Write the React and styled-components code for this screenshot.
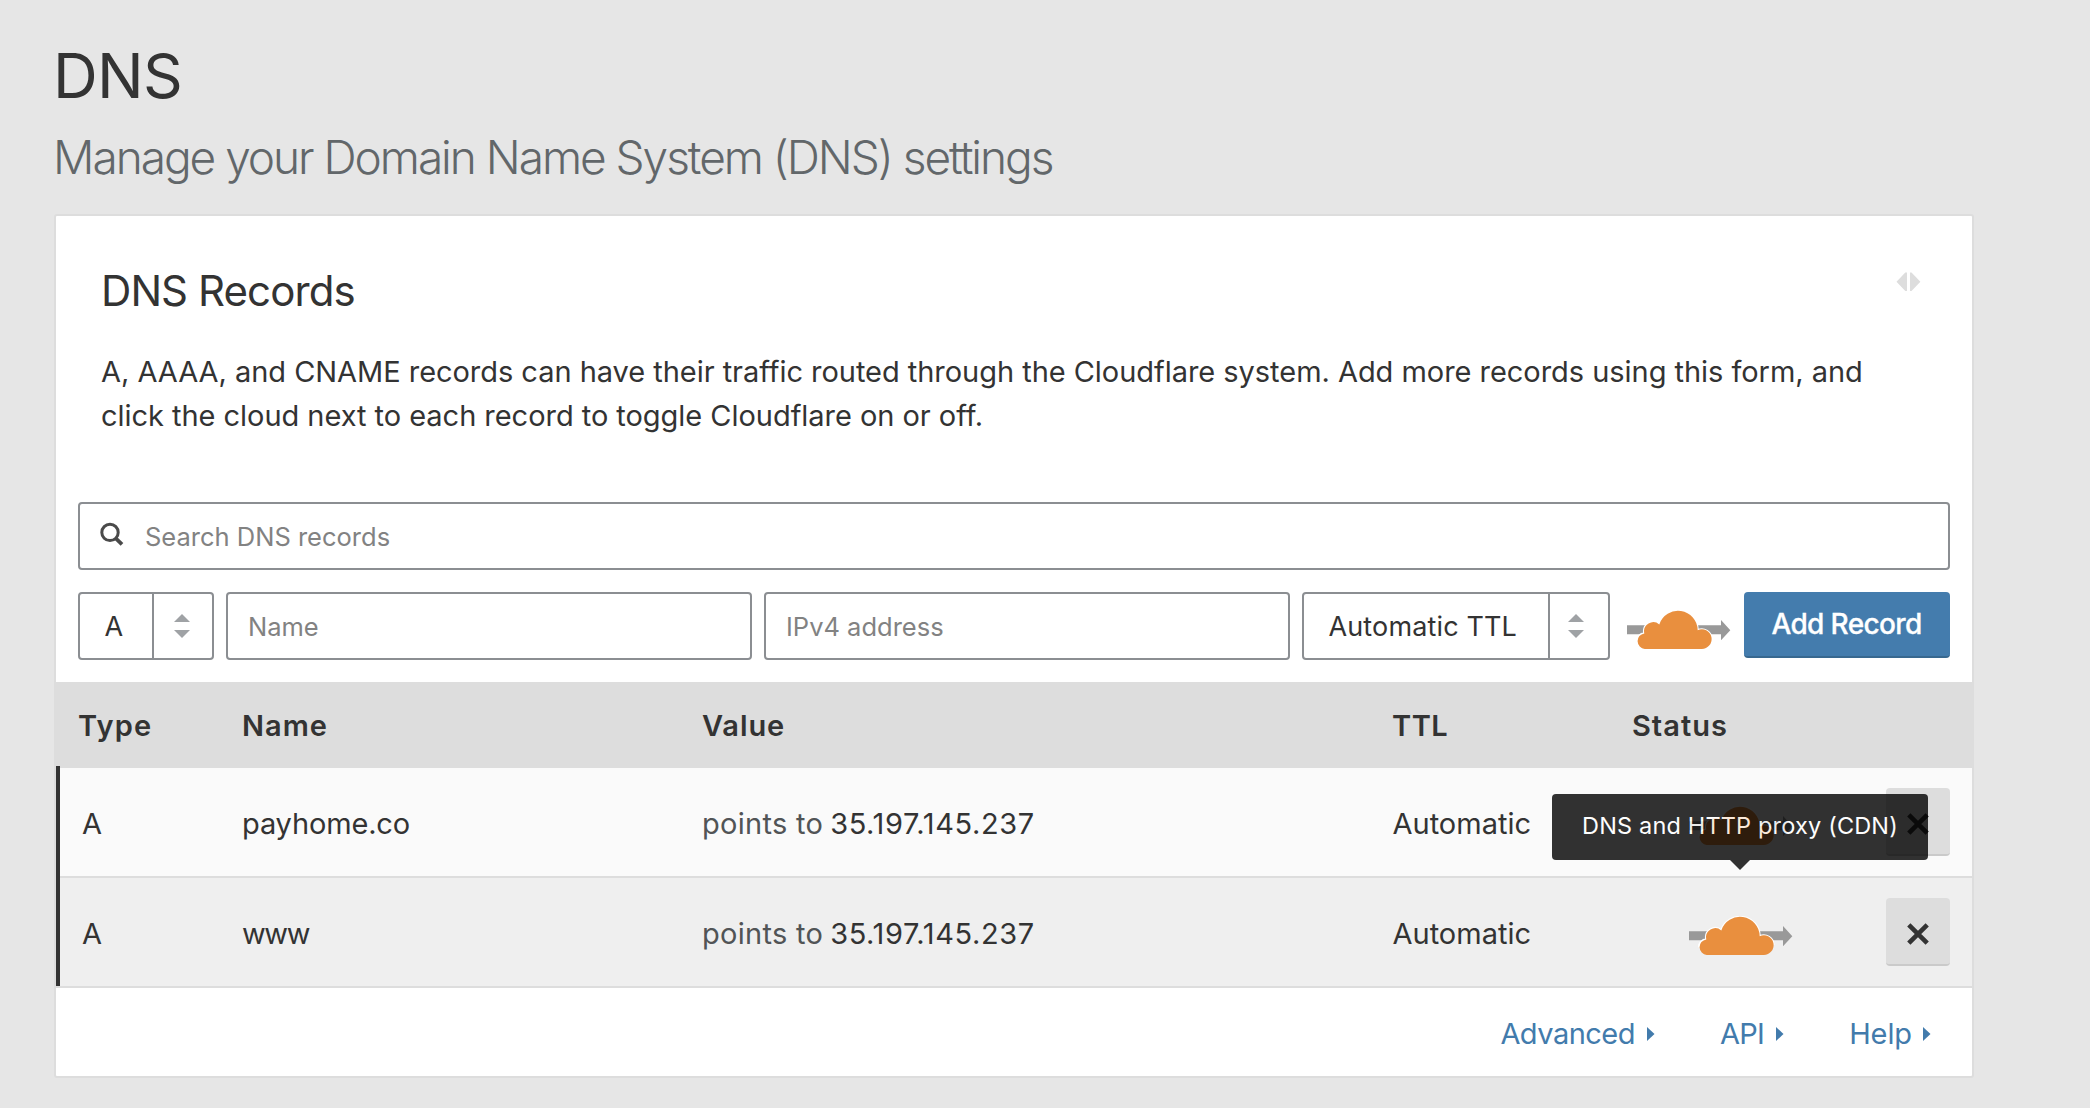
import React from "react";
import styled, { createGlobalStyle } from "styled-components";

const ink = "#333333";
const line = "#dddddd";
const fieldBorder = "#8b8e92";
const blue = "#427bac";

const GlobalStyle = createGlobalStyle`
  *, *::before, *::after { box-sizing: border-box; }
  body {
    margin: 0;
    background: #e6e6e6;
    color: ${ink};
    font-family: "Inter", "Liberation Sans", sans-serif;
  }
`;

const Page = styled.main`
  width: 1974px;
  min-height: 1108px;
  padding: 40px 0 0 54px;
`;

const Title = styled.h1`
  margin: 0 0 17px -1px;
  font-size: 62px;
  font-weight: 400;
  line-height: 72px;
  letter-spacing: -0.73px;
`;

const Subtitle = styled.p`
  margin: 0 0 29px -1px;
  color: #62676a;
  font-size: 46px;
  font-weight: 300;
  line-height: 56px;
  letter-spacing: -2.03px;
  white-space: nowrap;
`;

const Panel = styled.section`
  height: 864px;
  border: 2px solid ${line};
  border-radius: 3px;
  background: #fff;
`;

const Intro = styled.header`
  display: grid;
  grid-template-columns: 1fr auto;
  row-gap: 33px;
  height: 286px;
  align-content: start;
  padding: 49px 51px 0 45px;
`;

const PanelTitle = styled.h2`
  margin: 0;
  font-size: 42px;
  font-weight: 400;
  line-height: 52px;
  letter-spacing: -0.92px;
`;

const ToggleIcon = styled.svg`
  margin-top: 7px;
  fill: ${line};
`;

const Description = styled.p`
  grid-column: 1 / -1;
  width: 1800px;
  margin: 0;
  font-size: 29px;
  line-height: 44px;
  letter-spacing: -0.04px;
`;

const Form = styled.form`
  display: flex;
  flex-direction: column;
  gap: 22px;
  padding: 0 22px 22px;
`;

const FormRow = styled.div`
  display: flex;
  align-items: flex-start;
  gap: 12px;
`;

const Field = styled.label`
  display: flex;
  align-items: center;
  width: ${(p) => p.$width};
  height: 68px;
  padding-left: 20px;
  border: 2px solid ${fieldBorder};
  border-radius: 4px;
  background: #fff;
`;

const Placeholder = styled.span`
  color: #828282;
  font-size: 25.5px;
  white-space: nowrap;
`;

const SearchIcon = styled.svg`
  margin: -4px 21px 0 0;
  fill: none;
  stroke: #4a4a4a;
`;

const SelectBox = styled.div`
  display: flex;
  width: ${(p) => p.$width};
  height: 68px;
  border: 2px solid ${fieldBorder};
  border-radius: 4px;
`;

const SelectValue = styled.span`
  display: flex;
  flex: 1;
  align-items: center;
  padding-left: 24.5px;
  font-size: 27px;
  letter-spacing: 0.14px;
  white-space: nowrap;
`;

const SelectHandle = styled.span`
  display: flex;
  align-items: center;
  width: 60px;
  padding-left: ${(p) => p.$inset};
  border-left: 2px solid ${fieldBorder};

  svg { fill: #9fa2a5; }
`;

const ProxyToggle = styled.div`
  position: relative;
  flex: none;
  width: 104px;
  height: 40px;
  margin: ${(p) => p.$margin};

  > svg { display: block; }
`;

const AddButton = styled.button`
  width: 206px;
  height: 66px;
  padding: 0 1px 0 0;
  border: 0;
  border-bottom: 2px solid #38688f;
  border-radius: 4px;
  background: #447cad;
  color: #fff;
  font: 500 28px/64px "Inter", "Liberation Sans", sans-serif;
  letter-spacing: -0.64px;
  -webkit-text-stroke: 0.3px #fff;
`;

const columns = "460px 690px 240px 254px 64px";

const TableHead = styled.div`
  display: grid;
  grid-template-columns: 186px ${columns};
  align-items: center;
  height: 84px;
  padding-top: 3px;
  background: ${line};
`;

const HeadCell = styled.span`
  padding-left: ${(p) => p.$inset || "0"};
  font-size: 29px;
  font-weight: 600;
  letter-spacing: ${(p) => p.$track || "1px"};
`;

const Row = styled.div`
  height: 110px;
  border-left: 4px solid ${ink};
  background: ${(p) => (p.$hovered ? "#efefef" : "#fafafa")};
`;

const RowGrid = styled.div`
  display: grid;
  grid-template-columns: 182px ${columns};
  align-items: center;
  height: 100%;
  border-top: 2px solid ${line};
`;

const Cell = styled.span`
  padding: 3px 0 0 ${(p) => p.$inset || "0"};
  font-size: 29px;
  letter-spacing: ${(p) => p.$track || "0"};
  white-space: nowrap;
`;

const Muted = styled.span`
  color: #515456;
  letter-spacing: 0.29px;
`;

const Address = styled.span`
  margin-left: -1.5px;
  letter-spacing: 0.6px;
`;

const DeleteButton = styled.button`
  display: flex;
  align-items: center;
  justify-content: center;
  width: 64px;
  height: 68px;
  padding: 5px 0 0;
  border: 0;
  border-bottom: 2px solid #cacaca;
  border-radius: 4px;
  background: ${line};

  svg { stroke: ${ink}; }
`;

const Tooltip = styled.div`
  position: absolute;
  top: -122px;
  left: -137px;
  display: flex;
  align-items: center;
  width: 376px;
  height: 66px;
  padding: 0 0 3px 30px;
  border-radius: 4px;
  background: #000;
  color: #fff;
  font-size: 23.5px;
  letter-spacing: 0.17px;
  white-space: nowrap;
  opacity: 0.8;

  &::after {
    content: "";
    position: absolute;
    top: 100%;
    left: 178px;
    border: solid transparent;
    border-width: 10px 10px 0;
    border-top-color: #000;
  }
`;

const Footer = styled.footer`
  display: flex;
  align-items: center;
  justify-content: flex-end;
  gap: 65px;
  height: 90px;
  padding: 3px 41px 0 0;
  border-top: 2px solid ${line};
`;

const FooterLink = styled.a`
  display: flex;
  align-items: center;
  gap: 12px;
  color: ${blue};
  font-size: 29px;
  letter-spacing: ${(p) => p.$track || "0"};

  &:last-child { gap: 11px; }

  svg { fill: ${blue}; }
`;

function CloudIcon() {
  return (
    <svg width="104" height="40" viewBox="0 -0.7 104 40">
      <path fill="#999" d="M0 14.5H94V9.3L103.3 19.5 94 29.5V23.5H0Z" />
      <path
        fill="none"
        stroke="#fff"
        strokeWidth="2.2"
        d="M10 30.5A7.8 7.8 0 0 1 17.3 22.7A9.2 9.2 0 0 1 32.3 13.7A19.7 19.7 0 0 1 70.7 19.5A9.8 9.8 0 0 1 84.5 28.4"
      />
      <path
        fill="#e98f3e"
        d="M17.8 38.2A7.8 7.8 0 0 1 17.3 22.7A9.2 9.2 0 0 1 32.3 13.7A19.7 19.7 0 0 1 70.7 19.5A9.8 9.8 0 1 1 74.7 38.2Z"
      />
    </svg>
  );
}

function Select({ width, inset, children }) {
  return (
    <SelectBox $width={width}>
      <SelectValue>{children}</SelectValue>
      <SelectHandle $inset={inset}>
        <svg width="16" height="24" viewBox="0 0 16 24">
          <path d="M0 8L8 0L16 8ZM0 16H16L8 24Z" />
        </svg>
      </SelectHandle>
    </SelectBox>
  );
}

function RecordRow({ name, track, tooltip }) {
  return (
    <Row $hovered={Boolean(tooltip)}>
      <RowGrid>
        <Cell $inset="22px">A</Cell>
        <Cell $track={track}>{name}</Cell>
        <Cell>
          <Muted>points to </Muted>
          <Address>35.197.145.237</Address>
        </Cell>
        <Cell $inset="0.5px">Automatic</Cell>
        <ProxyToggle $margin="8px 0 0 57px">
          <CloudIcon />
          {tooltip && <Tooltip>{tooltip}</Tooltip>}
        </ProxyToggle>
        <DeleteButton type="button">
          <svg width="22" height="22" viewBox="0 0 22 22" strokeWidth="4.6">
            <path d="M1.8 1.8L20.2 20.2M20.2 1.8L1.8 20.2" />
          </svg>
        </DeleteButton>
      </RowGrid>
    </Row>
  );
}

const links = [
  { label: "Advanced", track: "-0.52px" },
  { label: "API", track: "-0.7px" },
  { label: "Help", track: "-0.1px" },
];

export default function App() {
  return (
    <>
      <GlobalStyle />
      <Page>
        <Title>DNS</Title>
        <Subtitle>Manage your Domain Name System (DNS) settings</Subtitle>
        <Panel>
          <Intro>
            <PanelTitle>DNS Records</PanelTitle>
            <ToggleIcon width="25" height="19" viewBox="0 0 25 19">
              <path d="M0.5 9.7L9.3 0.5H11V19H9.3ZM14 0.5H15.5L24.4 9.7L15.5 19H14Z" />
            </ToggleIcon>
            <Description>
              A, AAAA, and CNAME records can have their traffic routed through the Cloudflare system. Add more
              records using this form, and click the cloud next to each record to toggle Cloudflare on or off.
            </Description>
          </Intro>
          <Form>
            <Field $width="100%">
              <SearchIcon width="24" height="24" viewBox="0 0 24 24">
                <circle cx="10" cy="10.4" r="8.2" strokeWidth="3" />
                <path d="M15.8 16.4L22 22.4" strokeWidth="3.8" />
              </SearchIcon>
              <Placeholder>Search DNS records</Placeholder>
            </Field>
            <FormRow>
              <Select width="136px" inset="20px">A</Select>
              <Field $width="526px">
                <Placeholder>Name</Placeholder>
              </Field>
              <Field $width="526px">
                <Placeholder>IPv4 address</Placeholder>
              </Field>
              <Select width="308px" inset="18px">Automatic TTL</Select>
              <ProxyToggle $margin="18px 1px 0 5px">
                <CloudIcon />
              </ProxyToggle>
              <AddButton type="button">Add Record</AddButton>
            </FormRow>
          </Form>
          <TableHead>
            <HeadCell $inset="22px" $track="1.2px">Type</HeadCell>
            <HeadCell>Name</HeadCell>
            <HeadCell $track="0.9px">Value</HeadCell>
            <HeadCell $track="0.5px">TTL</HeadCell>
            <HeadCell>Status</HeadCell>
          </TableHead>
          <RecordRow name="payhome.co" track="-0.15px" />
          <RecordRow name="www" track="-1.4px" tooltip="DNS and HTTP proxy (CDN)" />
          <Footer>
            {links.map(({ label, track }) => (
              <FooterLink key={label} $track={track}>
                {label}
                <svg width="8" height="14" viewBox="0 0 8 14">
                  <path d="M0 0L7.5 7L0 14Z" />
                </svg>
              </FooterLink>
            ))}
          </Footer>
        </Panel>
      </Page>
    </>
  );
}
